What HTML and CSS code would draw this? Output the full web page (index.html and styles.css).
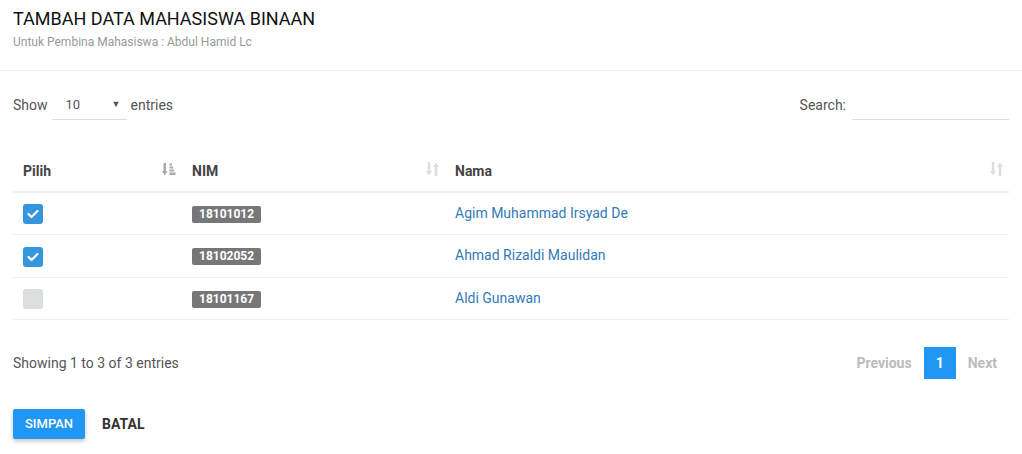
FILE: index.html
```html
<!DOCTYPE html>
<html lang="id">
<head>
<meta charset="utf-8">
<title>Tambah Data Mahasiswa Binaan</title>
<link rel="stylesheet" href="styles.css">
</head>
<body>
<div class="card">
  <div class="card-header">
    <h2 class="title">TAMBAH DATA MAHASISWA BINAAN</h2>
    <div class="subtitle">Untuk Pembina Mahasiswa : Abdul Hamid Lc</div>
  </div>
  <div class="card-body">
    <div class="toolbar">
      <div class="length">
        <span class="lbl">Show</span>
        <div class="select"><span>10</span><span class="caret">&#9660;</span></div>
        <span class="lbl">entries</span>
      </div>
      <div class="search">
        <span class="lbl">Search:</span>
        <div class="search-input"></div>
      </div>
    </div>

    <table class="table">
      <colgroup>
        <col class="c1"><col class="c2"><col class="c3">
      </colgroup>
      <thead>
        <tr>
          <th><div class="th-in"><span>Pilih</span>
            <svg class="sort sort-active" width="14" height="13" viewBox="0 0 14 13">
              <rect x="1.5" y="0" width="2.5" height="9" fill="currentColor"/>
              <path d="M0 8 L5.5 8 L2.75 12.5 Z" fill="currentColor"/>
              <rect x="7.5" y="0.5" width="2.5" height="2" fill="currentColor"/>
              <rect x="7.5" y="3.5" width="3.5" height="2" fill="currentColor"/>
              <rect x="7.5" y="6.5" width="4.5" height="2" fill="currentColor"/>
              <rect x="7.5" y="9.5" width="6" height="2.5" fill="currentColor"/>
            </svg></div></th>
          <th><div class="th-in"><span>NIM</span>
            <svg class="sort" width="13" height="14" viewBox="0 0 13 14">
              <rect x="1.75" y="0" width="2.5" height="10" fill="currentColor"/>
              <path d="M0 9 L6 9 L3 13.5 Z" fill="currentColor"/>
              <rect x="8.75" y="4" width="2.5" height="10" fill="currentColor"/>
              <path d="M7 5 L13 5 L10 0.5 Z" fill="currentColor"/>
            </svg></div></th>
          <th><div class="th-in"><span>Nama</span>
            <svg class="sort" width="13" height="14" viewBox="0 0 13 14">
              <rect x="1.75" y="0" width="2.5" height="10" fill="currentColor"/>
              <path d="M0 9 L6 9 L3 13.5 Z" fill="currentColor"/>
              <rect x="8.75" y="4" width="2.5" height="10" fill="currentColor"/>
              <path d="M7 5 L13 5 L10 0.5 Z" fill="currentColor"/>
            </svg></div></th>
        </tr>
      </thead>
      <tbody>
        <tr>
          <td><span class="chk checked"><svg width="12" height="10" viewBox="0 0 12 10"><path d="M1.5 5 L4.5 8 L10.5 2" fill="none" stroke="#fff" stroke-width="2.2" stroke-linecap="round" stroke-linejoin="round"/></svg></span></td>
          <td><span class="badge">18101012</span></td>
          <td><a class="link" href="#">Agim Muhammad Irsyad De</a></td>
        </tr>
        <tr>
          <td><span class="chk checked"><svg width="12" height="10" viewBox="0 0 12 10"><path d="M1.5 5 L4.5 8 L10.5 2" fill="none" stroke="#fff" stroke-width="2.2" stroke-linecap="round" stroke-linejoin="round"/></svg></span></td>
          <td><span class="badge">18102052</span></td>
          <td><a class="link" href="#">Ahmad Rizaldi Maulidan</a></td>
        </tr>
        <tr>
          <td><span class="chk"></span></td>
          <td><span class="badge">18101167</span></td>
          <td><a class="link" href="#">Aldi Gunawan</a></td>
        </tr>
      </tbody>
    </table>

    <div class="footer">
      <div class="info">Showing 1 to 3 of 3 entries</div>
      <div class="pagination">
        <span class="page disabled">Previous</span>
        <span class="page active">1</span>
        <span class="page disabled">Next</span>
      </div>
    </div>

    <div class="actions">
      <button class="btn btn-primary">SIMPAN</button>
      <button class="btn btn-link">BATAL</button>
    </div>
  </div>
</div>
</body>
</html>
```

FILE: styles.css
```css
* { box-sizing: border-box; }
html, body { margin: 0; padding: 0; background: #fff; }
body {
  font-family: Roboto, "Liberation Sans", Arial, sans-serif;
  font-size: 14px;
  color: #555;
}
.card-header {
  padding: 8px 13px 20px;
  border-bottom: 1px solid #eee;
}
.title {
  margin: 0;
  font-size: 18px;
  line-height: 22px;
  font-weight: 400;
  color: #111;
}
.subtitle {
  margin-top: 4px;
  font-size: 12px;
  line-height: 16px;
  color: #999;
}
.card-body {
  padding: 15px 13px 20px;
}
.toolbar {
  display: flex;
  justify-content: space-between;
  height: 34px;
}
.length, .search {
  display: flex;
  align-items: stretch;
  height: 34px;
}
.lbl {
  display: flex;
  align-items: center;
  padding-top: 3px;
}
.select {
  width: 75px;
  height: 34px;
  margin: 0 4px 0 4px;
  border-bottom: 1px solid #ddd;
  display: flex;
  align-items: center;
  justify-content: space-between;
  padding: 3px 6px 0 14px;
  font-size: 13px;
  color: #555;
}
.caret { font-size: 9px; color: #555; }
.search-input {
  width: 157px;
  height: 34px;
  margin-left: 6px;
  border-bottom: 1px solid #ddd;
}
.table {
  width: 100%;
  margin-top: 30px;
  border-collapse: collapse;
  table-layout: fixed;
}
.c1 { width: 169px; }
.c2 { width: 263px; }
.table th {
  padding: 11px 6px 9px 10px;
  line-height: 21px;
  text-align: left;
  font-weight: 700;
  color: #444;
  border-bottom: 2px solid #eee;
}
.th-in {
  display: flex;
  justify-content: space-between;
  align-items: center;
}
.sort { color: #ddd; margin-top: -5px; }
.sort-active { color: #aaa; }
.table td {
  padding: 10px 10px;
  line-height: 21px;
  border-bottom: 1px solid #eee;
  vertical-align: middle;
}
.chk {
  display: inline-flex;
  align-items: center;
  justify-content: center;
  width: 20px;
  height: 20px;
  border-radius: 3px;
  background: #dadee1;
  vertical-align: middle;
}
.chk.checked { background: #3596dd; }
.badge {
  display: inline-block;
  background: #777;
  color: #fff;
  font-size: 12px;
  font-weight: 700;
  line-height: 17px;
  padding: 0 7px;
  border-radius: 2px;
  vertical-align: middle;
}
.link { color: #337ab7; text-decoration: none; }
.footer {
  display: flex;
  justify-content: space-between;
  align-items: center;
  margin-top: 27px;
}
.info { color: #555; }
.pagination { display: flex; }
.page {
  height: 32px;
  line-height: 32px;
  padding: 0 12px;
  font-weight: 700;
}
.page.disabled { color: #bbb; }
.page.active { background: #2196f3; color: #fff; }
.actions {
  margin-top: 30px;
  display: flex;
  gap: 5px;
}
.btn {
  height: 30px;
  padding: 0 12px;
  border: none;
  border-radius: 2px;
  font-family: Roboto, "Liberation Sans", Arial, sans-serif;
  font-size: 13px;
  cursor: pointer;
}
.btn-primary {
  background: #2196f3;
  color: #fff;
  font-weight: 500;
  box-shadow: 0 2px 4px rgba(0,0,0,0.25);
}
.btn-link {
  background: transparent;
  color: #333;
  font-weight: 700;
  font-size: 14px;
}
```
